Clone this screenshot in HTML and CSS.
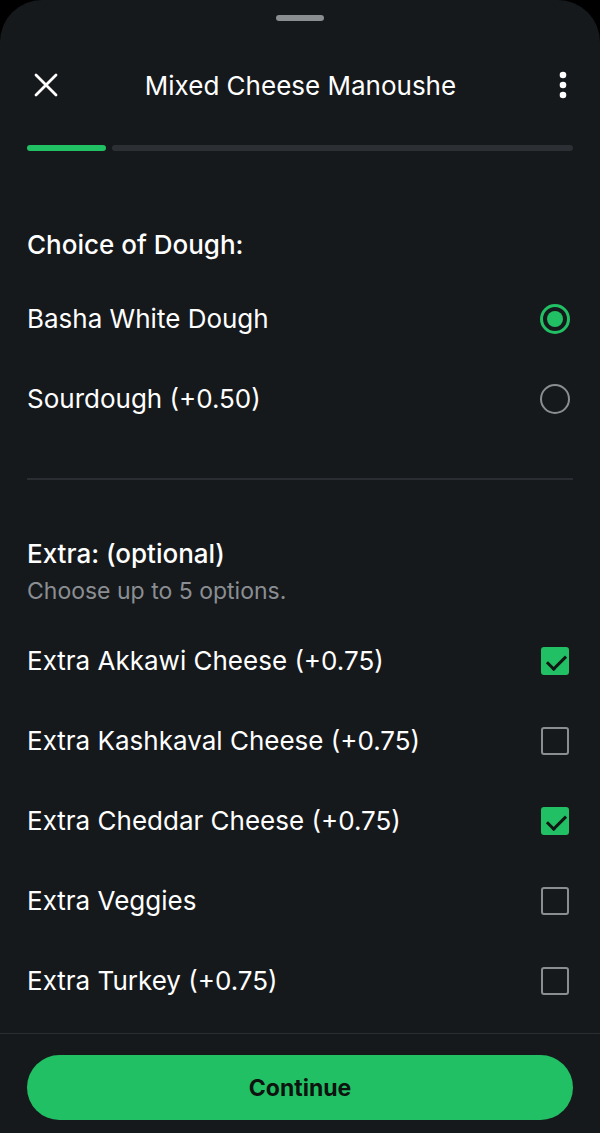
FILE: index.html
```html
<!DOCTYPE html>
<html lang="en">

<head>
    <meta charset="utf-8">
    <meta name="viewport" content="width=device-width, initial-scale=1.0">
    <title>Mixed Cheese Manoushe</title>

    <link rel="stylesheet" href="styles.css">
</head>

<body>
    <div class="sheet">
        <div class="handle"></div>

        <header class="topbar">
            <button class="icon-btn close" aria-label="Close">
                <svg width="24" height="24" viewBox="0 0 24 24">
                    <path d="M2 2 L22 22 M22 2 L2 22" stroke="#fff" stroke-width="2.8" stroke-linecap="round" fill="none" />
                </svg>
            </button>
            <h1 class="title">Mixed Cheese Manoushe</h1>
            <button class="icon-btn more" aria-label="More">
                <svg width="8" height="28" viewBox="0 0 8 28">
                    <circle cx="4" cy="4" r="3.3" fill="#fff" />
                    <circle cx="4" cy="14" r="3.3" fill="#fff" />
                    <circle cx="4" cy="24" r="3.3" fill="#fff" />
                </svg>
            </button>
        </header>

        <div class="progress">
            <span class="step done"></span>
            <span class="step"></span>
        </div>

        <main>
            <section class="group">
                <h2 class="group-title">Choice of Dough:</h2>
                <label class="option">
                    <span>Basha White Dough</span>
                    <span class="radio checked"></span>
                </label>
                <label class="option">
                    <span>Sourdough (+0.50)</span>
                    <span class="radio"></span>
                </label>
            </section>

            <hr class="divider">

            <section class="group extra">
                <h2 class="group-title">Extra: (optional)</h2>
                <p class="hint">Choose up to 5 options.</p>
                <label class="option">
                    <span>Extra Akkawi Cheese (+0.75)</span>
                    <span class="check checked"></span>
                </label>
                <label class="option">
                    <span>Extra Kashkaval Cheese (+0.75)</span>
                    <span class="check"></span>
                </label>
                <label class="option">
                    <span>Extra Cheddar Cheese (+0.75)</span>
                    <span class="check checked"></span>
                </label>
                <label class="option">
                    <span>Extra Veggies</span>
                    <span class="check"></span>
                </label>
                <label class="option">
                    <span>Extra Turkey (+0.75)</span>
                    <span class="check"></span>
                </label>
            </section>
        </main>

        <footer class="bottom">
            <button class="continue">Continue</button>
        </footer>
    </div>
</body>

</html>
```

FILE: styles.css
```css
* {
    box-sizing: border-box;
}

body {
    margin: 0;
    background: #000;
    font-family: Inter, Roboto, sans-serif;
    color: #fff;
}

.sheet {
    height: 1133px;
    background: #16191c;
    border-radius: 42px 42px 0 0;
    display: flex;
    flex-direction: column;
    overflow: hidden;
}

.handle {
    width: 48px;
    height: 6px;
    border-radius: 3px;
    background: #8b8e91;
    margin: 15px auto 0;
}

.topbar {
    display: grid;
    grid-template-columns: 1fr auto 1fr;
    align-items: center;
    height: 56px;
    margin-top: 36px;
    padding: 0 33px 0 34px;
}

.icon-btn {
    background: none;
    border: none;
    padding: 0;
    display: flex;
}

.more {
    justify-self: end;
}

.title {
    margin: 0;
    font-size: 26px;
    font-weight: 400;
}

.progress {
    display: flex;
    gap: 6px;
    margin: 32px 27px 0;
}

.step {
    height: 6px;
    border-radius: 3px;
    background: #2c2f33;
    flex: 1;
}

.step.done {
    flex: 0 0 79px;
    background: #22c064;
}

main {
    padding: 0 27px;
}

.group {
    margin-top: 78px;
}

.group-title {
    margin: 0 0 18px;
    font-size: 26px;
    font-weight: 500;
    line-height: 32px;
}

.extra {
    margin-top: 58px;
}

.extra .group-title {
    margin-bottom: 7px;
}

.hint {
    margin: 0 0 16px;
    font-size: 23px;
    line-height: 28px;
    color: #8a8e92;
}

.option {
    display: flex;
    align-items: center;
    justify-content: space-between;
    height: 80px;
    font-size: 26px;
    line-height: 30px;
}

.radio {
    width: 30px;
    height: 30px;
    border-radius: 50%;
    border: 2.5px solid #8b8e91;
    margin-right: 3px;
    display: flex;
    align-items: center;
    justify-content: center;
}

.radio.checked {
    border: 3px solid #22c064;
}

.radio.checked::after {
    content: "";
    width: 16px;
    height: 16px;
    border-radius: 50%;
    background: #22c064;
}

.check {
    width: 28px;
    height: 28px;
    border-radius: 3px;
    border: 2.5px solid #8b8e91;
    margin-right: 4px;
    position: relative;
}

.check.checked {
    background: #22c064;
    border-color: #22c064;
}

.check.checked::after {
    content: "";
    position: absolute;
    left: 4px;
    top: 2px;
    width: 16px;
    height: 8px;
    border-left: 3.5px solid #111513;
    border-bottom: 3.5px solid #111513;
    transform: translate(0, 4px) rotate(-45deg);
}

.divider {
    border: none;
    border-top: 2px solid #2a2d31;
    margin: 39px 0 0;
}

.bottom {
    margin-top: auto;
    border-top: 1px solid #2a2d31;
    padding: 21px 27px 13px;
}

.continue {
    width: 100%;
    height: 65px;
    border: none;
    border-radius: 33px;
    background: #22c064;
    color: #0d130f;
    font-family: Inter, Roboto, sans-serif;
    font-size: 23px;
    font-weight: 700;
}
```
